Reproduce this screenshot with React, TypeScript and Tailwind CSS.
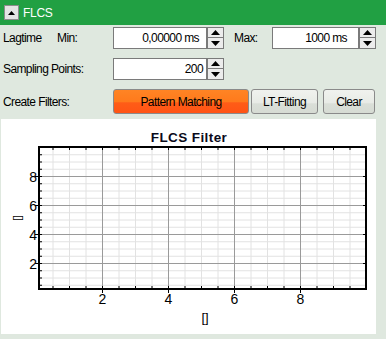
import React from "react";

const Spinner = () => (
  <div className="flex flex-col w-[17px] h-[22px]">
    <div className="h-[11px] border border-[#7a7a7a] bg-[#ececec] flex items-center justify-center">
      <svg width="9" height="5" viewBox="0 0 9 5"><polygon points="4.5,0 9,5 0,5" fill="#000" /></svg>
    </div>
    <div className="h-[11px] border border-t-0 border-[#7a7a7a] bg-[#ececec] flex items-center justify-center">
      <svg width="9" height="5" viewBox="0 0 9 5"><polygon points="0,0 9,0 4.5,5" fill="#000" /></svg>
    </div>
  </div>
);

const Input = ({ value, w, pr }: { value: string; w: string; pr: string }) => (
  <div className={`${w} h-[22px] bg-white border border-[#7a7a7a] flex items-center justify-end ${pr} text-black`}>
    {value}
  </div>
);

const Chart = () => {
  const X0 = 38, X1 = 365, Y0 = 28, Y1 = 170;
  const xp = (v: number) => 35 + 33 * v;
  const yp = (v: number) => 173 - 14.5 * v;
  const halves: number[] = [];
  for (let i = 1; i < 20; i++) halves.push(i / 2);
  const majors = [2, 4, 6, 8];
  return (
    <svg width="375" height="215" viewBox="0 0 375 215" className="tracking-normal">
      <text x="188" y="23" textAnchor="middle" letterSpacing="0.4" fontFamily="'Liberation Sans', Arial, sans-serif" fontWeight="bold" fontSize="13.5" fill="#0a0a1a">FLCS Filter</text>
      {halves.filter(v => !majors.includes(v)).map(v => (
        <g key={"m" + v}>
          <line x1={xp(v) + 0.5} x2={xp(v) + 0.5} y1={Y0} y2={Y1} stroke="#e2e2e2" strokeWidth="1" />
          {yp(v) > Y0 && yp(v) < Y1 && <line x1={X0} x2={X1} y1={yp(v) + 0.5} y2={yp(v) + 0.5} stroke="#e2e2e2" strokeWidth="1" />}
        </g>
      ))}
      {majors.map(v => (
        <g key={"M" + v}>
          <line x1={xp(v) + 0.5} x2={xp(v) + 0.5} y1={Y0} y2={Y1} stroke="#9a9a9a" strokeWidth="1" />
          <line x1={X0} x2={X1} y1={yp(v) + 0.5} y2={yp(v) + 0.5} stroke="#9a9a9a" strokeWidth="1" />
        </g>
      ))}
      {halves.map(v => (
        <g key={"t" + v}>
          <line x1={xp(v) + 0.5} x2={xp(v) + 0.5} y1={Y0} y2={Y0 + 3} stroke="#000" />
          {majors.includes(v) ? (
            <line x1={xp(v) + 0.5} x2={xp(v) + 0.5} y1={Y1 - 3} y2={Y1 + 4} stroke="#000" />
          ) : (
            <line x1={xp(v) + 0.5} x2={xp(v) + 0.5} y1={Y1 - 3} y2={Y1} stroke="#000" />
          )}
          {yp(v) > Y0 && yp(v) < Y1 && (majors.includes(v) ? (
            <>
              <line x1={X0 - 4} x2={X0 + 3} y1={yp(v) + 0.5} y2={yp(v) + 0.5} stroke="#000" />
              <line x1={X1 - 3} x2={X1} y1={yp(v) + 0.5} y2={yp(v) + 0.5} stroke="#000" />
            </>
          ) : (
            <line x1={X0} x2={X0 + 3} y1={yp(v) + 0.5} y2={yp(v) + 0.5} stroke="#000" />
          ))}
        </g>
      ))}
      <rect x={X0} y={Y0} width={X1 - X0} height={Y1 - Y0} fill="none" stroke="#000" strokeWidth="2" />
      {majors.map(v => (
        <g key={"l" + v} fontFamily="'Liberation Sans', Arial, sans-serif" fontSize="14" fill="#000">
          <text x={xp(v) + 0.5} y={185} textAnchor="middle">{v}</text>
          <text x={36} y={yp(v) + 5.5} textAnchor="end">{v}</text>
        </g>
      ))}
      <text x="204" y="203" textAnchor="middle" fontFamily="'Liberation Sans', Arial, sans-serif" fontSize="13" fill="#000">[]</text>
      <text x="0" y="0" transform="translate(20,99) rotate(-90)" textAnchor="middle" fontFamily="'Liberation Sans', Arial, sans-serif" fontSize="10" fill="#000">[]</text>
    </svg>
  );
};

export default function App() {
  return (
    <div className="w-[386px] h-[339px] bg-[#dfe8df] text-[12px] tracking-[-0.6px] text-black overflow-hidden" style={{ fontFamily: "'Liberation Sans', Arial, sans-serif" }}>
      <div className="h-[25px] bg-[#21a043] flex items-center pl-[4px] gap-[4px]">
        <div className="w-[15px] h-[15px] border border-[#8c8c8c] bg-[#e4e4e4] flex items-center justify-center">
          <svg width="7" height="4" viewBox="0 0 7 4"><polygon points="3.5,0 7,4 0,4" fill="#000" /></svg>
        </div>
        <span className="text-white text-[12px] tracking-[-0.3px]">FLCS</span>
      </div>
      <div className="flex items-center h-[22px] mt-[2px] pl-[3px]">
        <span className="w-[54px]">Lagtime</span>
        <span className="w-[56px]">Min:</span>
        <Input value="0,00000 ms" w="w-[94px]" pr="pr-[7px]" />
        <Spinner />
        <span className="w-[38px] ml-[10px]">Max:</span>
        <Input value="1000 ms" w="w-[87px]" pr="pr-[11px]" />
        <Spinner />
      </div>
      <div className="flex items-center h-[22px] mt-[9px] pl-[3px]">
        <span className="w-[110px]">Sampling Points:</span>
        <Input value="200" w="w-[94px]" pr="pr-[3px]" />
        <Spinner />
      </div>
      <div className="flex items-center h-[25px] mt-[9px] pl-[3px]">
        <span className="w-[110px]">Create Filters:</span>
        <button className="w-[136px] h-[25px] rounded-[3px] border border-[#8a8a8a] bg-[linear-gradient(to_bottom,#ff8424_0%,#ff7a1c_50%,#ff5c17_56%,#ff5414_100%)] text-black">Pattern Matching</button>
        <button className="w-[67px] h-[25px] ml-[2px] rounded-[3px] border border-[#8a8a8a] bg-[linear-gradient(to_bottom,#f0f2ee_0%,#e8ebe6_55%,#dadfd8_60%,#d6dbd3_100%)] text-black">LT-Fitting</button>
        <button className="w-[52px] h-[25px] ml-[5px] rounded-[3px] border border-[#8a8a8a] bg-[linear-gradient(to_bottom,#f0f2ee_0%,#e8ebe6_55%,#dadfd8_60%,#d6dbd3_100%)] text-black">Clear</button>
      </div>
      <div className="ml-[1px] mt-[5px] w-[375px] h-[215px] bg-white">
        <Chart />
      </div>
    </div>
  );
}
